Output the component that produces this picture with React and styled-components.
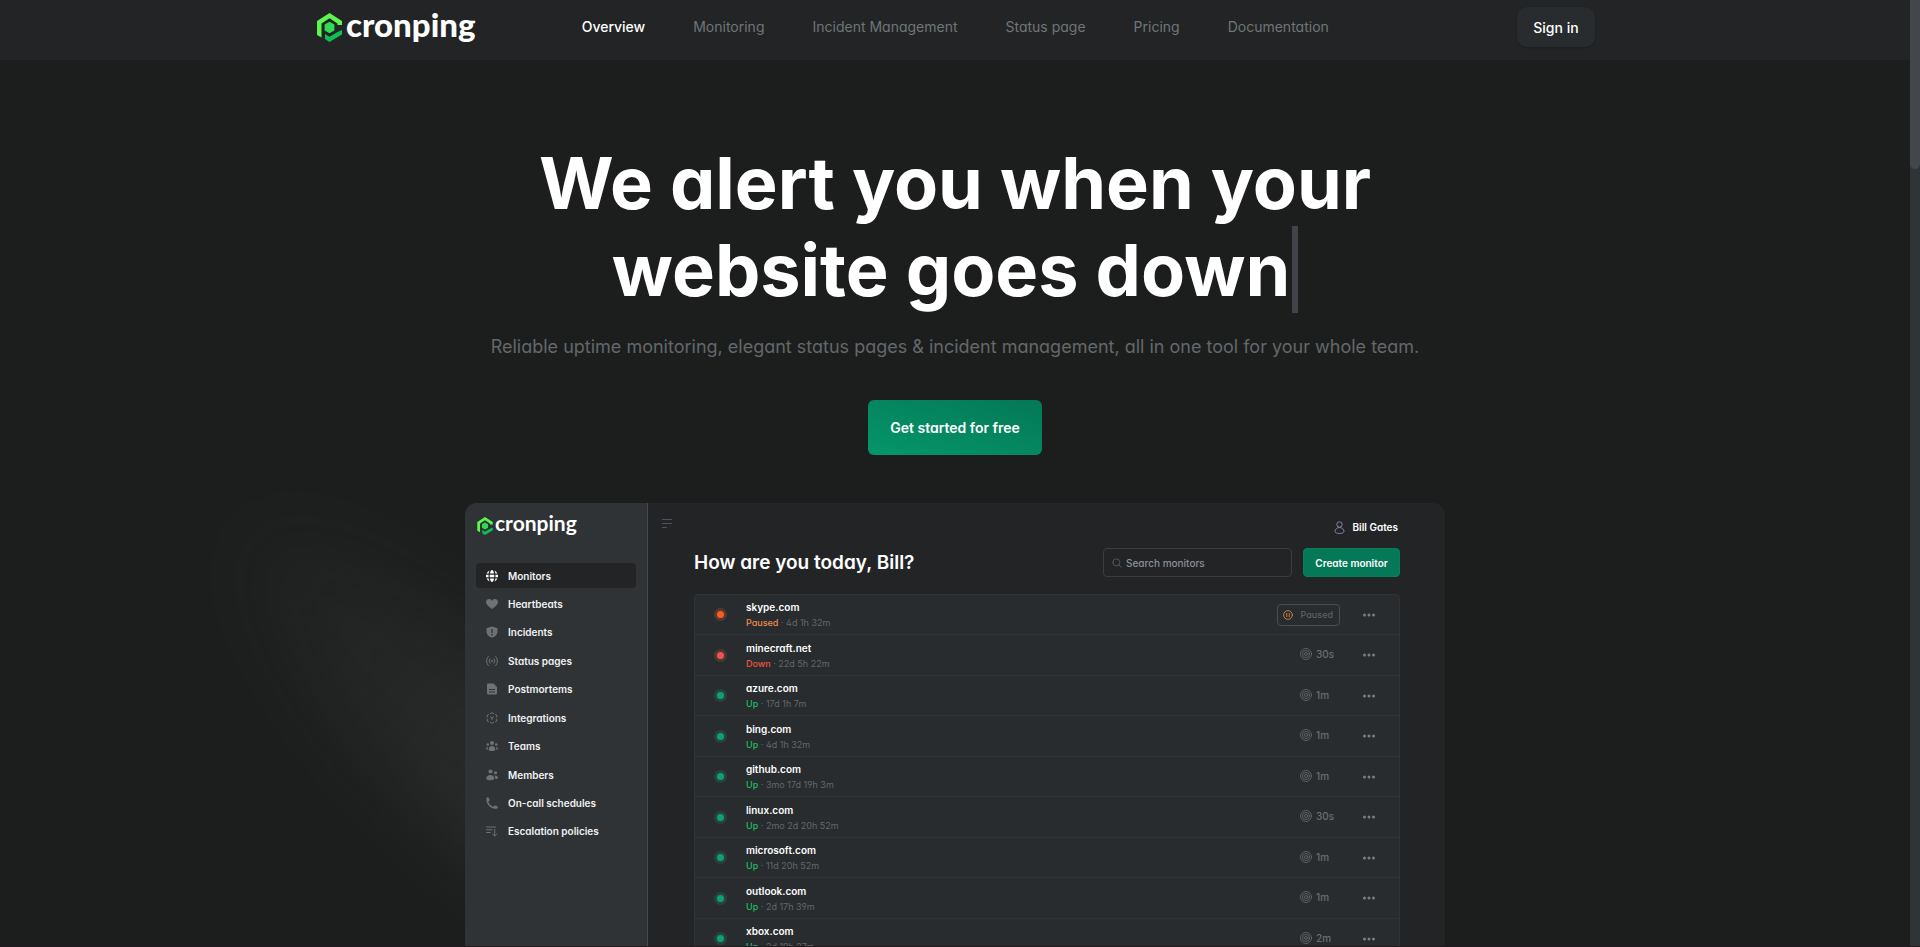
import React from 'react'
import styled, { createGlobalStyle } from 'styled-components';

const GlobalStyle = createGlobalStyle`
    * {
        box-sizing: border-box;
    }
    html {
        height: 100%;
        overflow: hidden;
    }
    body {
        margin: 0;
        height: 100%;
        background: #1c1e1d;
        color: #ffffff;
        font-family: Inter, "Liberation Sans", sans-serif;
        font-feature-settings: "cv11", "cv02", "cv03", "cv04";
    }
    #root {
        height: 100%;
    }
    button, input {
        font: inherit;
        font-feature-settings: inherit;
        color: inherit;
    }
`;

const Screen = styled.div`
    display: flex;
    height: 100%;
    overflow: hidden;
    border-bottom: 1px solid #231a1f;
`;

const Page = styled.div`
    flex: 1;
    min-width: 0;
    overflow: hidden;
`;

const ScrollTrack = styled.div`
    width: 10px;
    background: #2f3437;
`;

const ScrollThumb = styled.div`
    height: 169px;
    border-radius: 0 0 5px 5px;
    background: #43464a;
`;

const Header = styled.header`
    height: 60px;
    padding-bottom: 6px;
    background: #232426;
    display: flex;
    justify-content: center;
`;

const HeaderInner = styled.div`
    flex: 0 1 1280px;
    display: flex;
    align-items: center;
    justify-content: space-between;
    padding-left: 2px;
`;

const Nav = styled.nav`
    display: flex;
    gap: 48px;
    margin-right: 82px;
`;

const NavLink = styled.a`
    font-size: 14px;
    line-height: 20px;
    font-weight: ${(props) => (props.$active ? 500 : 400)};
    color: ${(props) => (props.$active ? '#ffffff' : '#6f7678')};
    text-decoration: none;
`;

const SignIn = styled.button`
    height: 40px;
    min-width: 78px;
    padding: 0 16px;
    border: 0;
    border-radius: 10px;
    background: #282c2e;
    box-shadow: 0 1px 2px rgba(0, 0, 0, 0.15);
    font-size: 14px;
    font-weight: 500;
    cursor: pointer;
`;

const Hero = styled.section`
    display: flex;
    flex-direction: column;
    align-items: center;
    padding-top: 79px;
`;

const Title = styled.h1`
    margin: 0;
    max-width: 896px;
    text-align: center;
    font-size: 72px;
    line-height: 87px;
    font-weight: 700;
`;

const TypedLine = styled.span`
    display: inline-block;
    padding-right: 2px;
    border-right: 6px solid #43444a;
`;

const Lead = styled.p`
    margin: 20px 0 0;
    font-size: 18px;
    line-height: 28px;
    color: #63686b;
`;

const GetStarted = styled.button`
    margin-top: 39px;
    height: 55px;
    padding: 0 22px;
    border: 0;
    border-radius: 6px;
    background: linear-gradient(to top right, #059669, #047857);
    font-size: 14px;
    font-weight: 600;
    cursor: pointer;
`;

const Stage = styled.div`
    position: relative;
    width: 980px;
    max-width: 100%;
    margin-top: 48px;
`;

const Glow = styled.div`
    position: absolute;
    left: -295px;
    top: 152px;
    width: 580px;
    height: 160px;
    border-radius: 50%;
    background: linear-gradient(to right, rgba(110, 114, 112, 0.03), rgba(110, 114, 112, 0.15) 60%);
    filter: blur(34px);
    transform: rotate(44deg);
`;

const Dashboard = styled.div`
    position: relative;
    display: flex;
    min-height: 620px;
    border-radius: 12px;
    overflow: hidden;
    background: #232426;
`;

const Sidebar = styled.aside`
    width: 183px;
    flex-shrink: 0;
    padding: 14px 11px 0;
    background: #2f3336;
    border-right: 1px solid #45494c;
`;

const SideMenu = styled.ul`
    list-style: none;
    height: 281px;
    margin: 28px 0 0;
    padding: 0;
    display: flex;
    flex-direction: column;
    justify-content: space-between;
`;

const SideLink = styled.a`
    display: flex;
    align-items: center;
    gap: 10px;
    height: 25px;
    padding: 0 10px;
    border-radius: 4px;
    background: ${(props) => (props.$active ? '#232426' : 'transparent')};
    color: #f1f2f2;
    font-size: 10px;
    font-weight: 600;
    text-decoration: none;

    svg {
        color: ${(props) => (props.$active ? '#ffffff' : '#6c7275')};
    }
`;

const Main = styled.div`
    flex: 1;
    padding: 12px 45px 0 13px;
`;

const TopBar = styled.div`
    display: flex;
    justify-content: space-between;
    height: 24px;
`;

const MenuButton = styled.button`
    height: 16px;
    padding: 0;
    border: 0;
    background: none;
    color: #4b5361;
    line-height: 0;
`;

const User = styled.div`
    display: flex;
    align-items: center;
    gap: 7px;
    padding-right: 2px;
    font-size: 10px;
    font-weight: 600;

    svg {
        color: #8486a4;
    }
`;

const Content = styled.div`
    padding-left: 33px;
`;

const Toolbar = styled.div`
    display: flex;
    align-items: center;
    gap: 11px;
    margin-top: 9px;
`;

const Greeting = styled.h2`
    flex: 1;
    margin: 0;
    font-size: 19px;
    line-height: 28px;
    font-weight: 600;
`;

const Search = styled.label`
    display: flex;
    align-items: center;
    gap: 4px;
    width: 189px;
    height: 29px;
    padding: 0 8px;
    border: 1px solid #3b3e41;
    border-radius: 4px;
    color: #5b6063;
`;

const SearchInput = styled.input`
    flex: 1;
    min-width: 0;
    padding: 0;
    border: 0;
    outline: 0;
    background: none;
    font-size: 10px;
    font-weight: 500;

    &::placeholder {
        color: #8a9199;
        opacity: 1;
    }
`;

const CreateButton = styled.button`
    height: 29px;
    min-width: 97px;
    padding: 0 11px;
    border: 1px solid #05805d;
    border-radius: 4px;
    background: #047857;
    font-size: 10px;
    font-weight: 600;
    white-space: nowrap;
`;

const MonitorTable = styled.table`
    width: 100%;
    margin-top: 17px;
    border: 1px solid #303437;
    border-radius: 4px;
    border-spacing: 0;
    background: #282c2e;
    font-size: 10px;
`;

const Cell = styled.td`
    height: ${(props) => (props.$tall ? '41px' : '40px')};
    width: ${(props) => props.$width || 'auto'};
    padding: ${(props) => props.$padding || '0'};
    border-bottom: 1px solid #303437;
    text-align: ${(props) => props.$align || 'left'};
`;

const dotColors = {
    Paused: '#ff5b1f',
    Down: '#ef5350',
    Up: '#10a070',
};

const haloColors = {
    Paused: '#513b30',
    Down: '#4c3638',
    Up: '#27443d',
};

const textColors = {
    Paused: '#f08a4b',
    Down: '#ef5340',
    Up: '#1fbf63',
};

const Dot = styled.span`
    display: block;
    width: 13px;
    height: 13px;
    border: 3px solid ${(props) => haloColors[props.$status]};
    border-radius: 50%;
    background: ${(props) => dotColors[props.$status]};
`;

const Host = styled.div`
    font-weight: 600;
    line-height: 14px;
`;

const Since = styled.div`
    margin-top: 2px;
    font-size: 9px;
    line-height: 14px;
    color: #63686b;
`;

const State = styled.span`
    color: ${(props) => textColors[props.$status]};
    font-weight: 500;
`;

const Interval = styled.span`
    display: inline-flex;
    align-items: center;
    gap: 4px;
    width: 40px;
    color: #6a6f72;
    font-weight: 500;
    text-align: left;
`;

const PausedTag = styled.span`
    display: inline-flex;
    align-items: center;
    gap: 8px;
    height: 22px;
    padding: 0 6px 0 5px;
    border: 1px solid #4a4e51;
    border-radius: 4px;
    font-size: 9px;
    font-weight: 500;
    color: #5d6265;
`;

const MoreButton = styled.button`
    display: block;
    padding: 0;
    border: 0;
    background: none;
    color: #797e81;
    line-height: 0;
`;

const Brand = styled.a`
    display: flex;
    align-items: center;
    gap: ${(props) => (props.$small ? '2px' : '4px')};
    padding-left: ${(props) => (props.$small ? '1px' : '0')};
    color: #ffffff;
    font-family: Lato, Inter, sans-serif;
    font-size: ${(props) => (props.$small ? '21px' : '33px')};
    line-height: ${(props) => (props.$small ? '20px' : '34px')};
    font-weight: ${(props) => (props.$small ? 700 : 900)};
    text-decoration: none;
`;

const Wordmark = styled.span`
    margin-top: -6px;
`;

const Logo = ({ small }) => (
    <Brand href="#" $small={small}>
        <svg width={small ? 16 : 25} height={small ? 18 : 29} viewBox="0 0 25 29">
            <path d="M0 8 L12.5 0 L25 8 V12 H20.500 V10.500 L12.500 5.200 L4.500 10.500 V24.500 L0 22 Z" fill="#5cf64f" />
            <path d="M25 17 V21.500 L12.500 29 L8 26 V21 L12.500 23.700 L20.500 19 Z" fill="#12bd55" />
            <path d="M12.500 8.800 L17.400 11.600 V17.400 L12.500 20.200 L7.600 17.400 V11.600 Z" fill="#30da52" />
        </svg>
        <Wordmark>cronping</Wordmark>
    </Brand>
)

const Icon = ({ size = 12, children }) => (
    <svg width={size} height={size} viewBox="0 0 24 24" fill="currentColor" aria-hidden="true">
        {children}
    </svg>
)

const outline = { fill: 'none', stroke: 'currentColor', strokeWidth: 2, strokeLinecap: 'round' };

const icons = {
    globe: (
        <Icon>
            <path d="M8 7C8.600 3 10 0 12 0s3.400 3 4 7zM8 17h8c-.6 4-2 7-4 7s-3.400-3-4-7zM7.500 9.500h9v5h-9zM5.300 7C5.600 4.500 6.300 2.500 7.200 1.100A12 12 0 0 0 1.200 7zM18.700 7h4.100a12 12 0 0 0-6-5.900c.9 1.400 1.600 3.400 1.900 5.900zM.3 9.500h4.800v5H.3a12 12 0 0 1 0-5zM18.900 9.500h4.800a12 12 0 0 1 0 5h-4.800zM1.200 17h4.100c.3 2.500 1 4.500 1.900 5.900a12 12 0 0 1-6-5.900zM18.700 17h4.100a12 12 0 0 1-6 5.900c.9-1.400 1.600-3.400 1.900-5.900z" />
        </Icon>
    ),
    heart: (
        <Icon>
            <path d="M12 22C5 17 0 13 0 8c0-3.500 2.800-6 6-6 2.500 0 4.700 1.300 6 3.300C13.300 3.300 15.500 2 18 2c3.200 0 6 2.500 6 6 0 5-5 9-12 14z" />
        </Icon>
    ),
    shield: (
        <Icon>
            <path fillRule="evenodd" d="M12 1l11 3.500V11c0 6-4.500 10.500-11 12.500C5.500 21.500 1 17 1 11V4.500zM10.600 6v8h2.800V6zm0 10v2.800h2.800V16z" />
        </Icon>
    ),
    signal: (
        <Icon>
            <circle cx="12" cy="12" r="2" />
            <path {...outline} d="M4.500 3a13 13 0 0 0 0 18M19.500 3a13 13 0 0 1 0 18M8 7.500a7 7 0 0 0 0 9M16 7.500a7 7 0 0 1 0 9" />
        </Icon>
    ),
    doc: (
        <Icon>
            <path fillRule="evenodd" d="M4 1h11l7 7v12a3 3 0 0 1-3 3H5a3 3 0 0 1-3-3V3a2 2 0 0 1 2-2zM6 12v2h12v-2zm0 5v2h12v-2z" />
        </Icon>
    ),
    cube: (
        <Icon>
            <path {...outline} d="M9 3l3-1.500L15 3M19 5l2.500 1.500V10M21.500 14.500V18L19 19.500M15 21l-3 1.500L9 21M5 19.500L2.500 18v-3.500M2.500 10V6.500L5 5M9 10l3 2 3-2M12 12v3.500" />
        </Icon>
    ),
    teams: (
        <Icon>
            <circle cx="12" cy="6" r="4" />
            <circle cx="3.500" cy="9" r="2.500" />
            <circle cx="20.500" cy="9" r="2.500" />
            <path d="M12 12c4 0 6.500 3 6.500 7 0 2-3 3-6.500 3s-6.500-1-6.500-3c0-4 2.500-7 6.500-7zM4 13.500c-2.500.5-4 2.500-4 5 0 1 1.500 1.500 3 1.500 0-3 .3-4.500 1-6.500zM20 13.500c2.500.5 4 2.500 4 5 0 1-1.500 1.500-3 1.500 0-3-.3-4.500-1-6.500z" />
        </Icon>
    ),
    members: (
        <Icon>
            <circle cx="9" cy="5" r="4.200" />
            <circle cx="19" cy="7.500" r="3.200" />
            <path d="M8.500 12c4.500 0 8 3 8 7 0 2.500-3.500 3.500-8 3.500S.5 21.500.5 19c0-4 3.500-7 8-7zM16.500 13c4.500-.8 7.500 1.500 7.500 4.500 0 1.800-2 2.500-5.500 2.500 0-3-.5-5-2-7z" />
        </Icon>
    ),
    phone: (
        <Icon>
            <path d="M1 1.500C2.500 0 5 .2 6 2l1 4c.3 1.500-1.500 2.500-2.500 3.500 1.500 4.500 5 8 10 10 1-1 2-2.800 3.500-2.500l4 1c2 .8 2 3.500.5 5-7 2-13-1.500-16.500-5.500S-.5 8 1 1.500z" />
        </Icon>
    ),
    escalation: (
        <Icon>
            <path {...outline} d="M1.500 4h18M1.500 9.500h11M1.500 15h7M17.500 9v13M13.500 18l4 4 4-4" />
        </Icon>
    ),
};

const navItems = ['Overview', 'Monitoring', 'Incident Management', 'Status page', 'Pricing', 'Documentation'];

const sideItems = [
    { label: 'Monitors', icon: icons.globe },
    { label: 'Heartbeats', icon: icons.heart },
    { label: 'Incidents', icon: icons.shield },
    { label: 'Status pages', icon: icons.signal },
    { label: 'Postmortems', icon: icons.doc },
    { label: 'Integrations', icon: icons.cube },
    { label: 'Teams', icon: icons.teams },
    { label: 'Members', icon: icons.members },
    { label: 'On-call schedules', icon: icons.phone },
    { label: 'Escalation policies', icon: icons.escalation },
];

const monitors = [
    { host: 'skype.com', status: 'Paused', since: '4d 1h 32m' },
    { host: 'minecraft.net', status: 'Down', since: '22d 5h 22m', every: '30s' },
    { host: 'azure.com', status: 'Up', since: '17d 1h 7m', every: '1m' },
    { host: 'bing.com', status: 'Up', since: '4d 1h 32m', every: '1m' },
    { host: 'github.com', status: 'Up', since: '3mo 17d 19h 3m', every: '1m' },
    { host: 'linux.com', status: 'Up', since: '2mo 2d 20h 52m', every: '30s' },
    { host: 'microsoft.com', status: 'Up', since: '11d 20h 52m', every: '1m' },
    { host: 'outlook.com', status: 'Up', since: '2d 17h 39m', every: '1m' },
    { host: 'xbox.com', status: 'Up', since: '2d 19h 27m', every: '2m' },
];

const MonitorRow = ({ monitor, tall }) => {
    const { host, status, since, every } = monitor;

    return (
        <tr>
            <Cell $tall={tall} $width="51px" $padding="0 0 0 19px">
                <Dot $status={status} />
            </Cell>
            <Cell $tall={tall} $padding="1px 0 0">
                <Host>{host}</Host>
                <Since><State $status={status}>{status}</State> · {since}</Since>
            </Cell>
            <Cell $tall={tall} $align="right">
                {every ? (
                    <Interval>
                        <Icon>
                            <circle {...outline} strokeWidth={1.600} cx="12" cy="12" r="11" />
                            <circle {...outline} strokeWidth={1.600} cx="12" cy="12" r="7" />
                            <circle {...outline} strokeWidth={1.600} cx="12" cy="12" r="3" />
                        </Icon>
                        {every}
                    </Interval>
                ) : (
                    <PausedTag>
                        <svg width="10" height="10" viewBox="0 0 24 24" {...outline} stroke="#e58a4e">
                            <circle cx="12" cy="12" r="10.500" />
                            <path d="M9 8v8M15 8v8" />
                        </svg>
                        Paused
                    </PausedTag>
                )}
            </Cell>
            <Cell $tall={tall} $width="59px" $padding="0 0 0 23px">
                <MoreButton aria-label={`Options for ${host}`}>
                    <svg width="12" height="4" viewBox="0 0 12 4" fill="currentColor">
                        <circle cx="1.500" cy="2" r="1.500" />
                        <circle cx="6" cy="2" r="1.500" />
                        <circle cx="10.500" cy="2" r="1.500" />
                    </svg>
                </MoreButton>
            </Cell>
        </tr>
    )
}

const App = () => {
    return (
        <>
            <GlobalStyle />
            <Screen>
                <Page>
                    <Header>
                        <HeaderInner>
                            <Logo />
                            <Nav>
                                {navItems.map((item, i) => (
                                    <NavLink key={item} href="#" $active={i === 0}>{item}</NavLink>
                                ))}
                            </Nav>
                            <SignIn>Sign in</SignIn>
                        </HeaderInner>
                    </Header>
                    <Hero>
                        <Title>
                            We alert you when your <TypedLine>website goes down</TypedLine>
                        </Title>
                        <Lead>
                            Reliable uptime monitoring, elegant status pages &amp; incident management, all in one tool for your whole team.
                        </Lead>
                        <GetStarted>Get started for free</GetStarted>
                        <Stage>
                            <Glow />
                            <Dashboard>
                                <Sidebar>
                                    <Logo small />
                                    <SideMenu>
                                        {sideItems.map((item, i) => (
                                            <li key={item.label}>
                                                <SideLink href="#" $active={i === 0}>
                                                    {item.icon}
                                                    {item.label}
                                                </SideLink>
                                            </li>
                                        ))}
                                    </SideMenu>
                                </Sidebar>
                                <Main>
                                    <TopBar>
                                        <MenuButton aria-label="Toggle menu">
                                            <svg width="12" height="10" viewBox="0 0 12 10" fill="none" stroke="currentColor">
                                                <path d="M1 1.500h10M1 5.500h10M1 9.500h5" />
                                            </svg>
                                        </MenuButton>
                                        <User>
                                            <svg width="11" height="13" viewBox="0 0 11 13" fill="none" stroke="currentColor">
                                                <circle cx="5.500" cy="3.500" r="2.700" />
                                                <path d="M5.500 6.500c2.500 0 4.500 1.800 4.500 3.800 0 1.500-2 2.200-4.500 2.200S1 11.800 1 10.300c0-2 2-3.800 4.500-3.800z" />
                                            </svg>
                                            Bill Gates
                                        </User>
                                    </TopBar>
                                    <Content>
                                        <Toolbar>
                                            <Greeting>How are you today, Bill?</Greeting>
                                            <Search>
                                                <Icon size={10}>
                                                    <path {...outline} d="M2 10.500a8.500 8.500 0 1 0 17 0a8.500 8.500 0 1 0-17 0M17 17l5.500 5.500" />
                                                </Icon>
                                                <SearchInput placeholder="Search monitors" aria-label="Search monitors" />
                                            </Search>
                                            <CreateButton>Create monitor</CreateButton>
                                        </Toolbar>
                                        <MonitorTable>
                                            <tbody>
                                                {monitors.map((monitor, i) => (
                                                    <MonitorRow key={monitor.host} monitor={monitor} tall={i % 2 === 1} />
                                                ))}
                                            </tbody>
                                        </MonitorTable>
                                    </Content>
                                </Main>
                            </Dashboard>
                        </Stage>
                    </Hero>
                </Page>
                <ScrollTrack>
                    <ScrollThumb />
                </ScrollTrack>
            </Screen>
        </>
    )
}

export default App
